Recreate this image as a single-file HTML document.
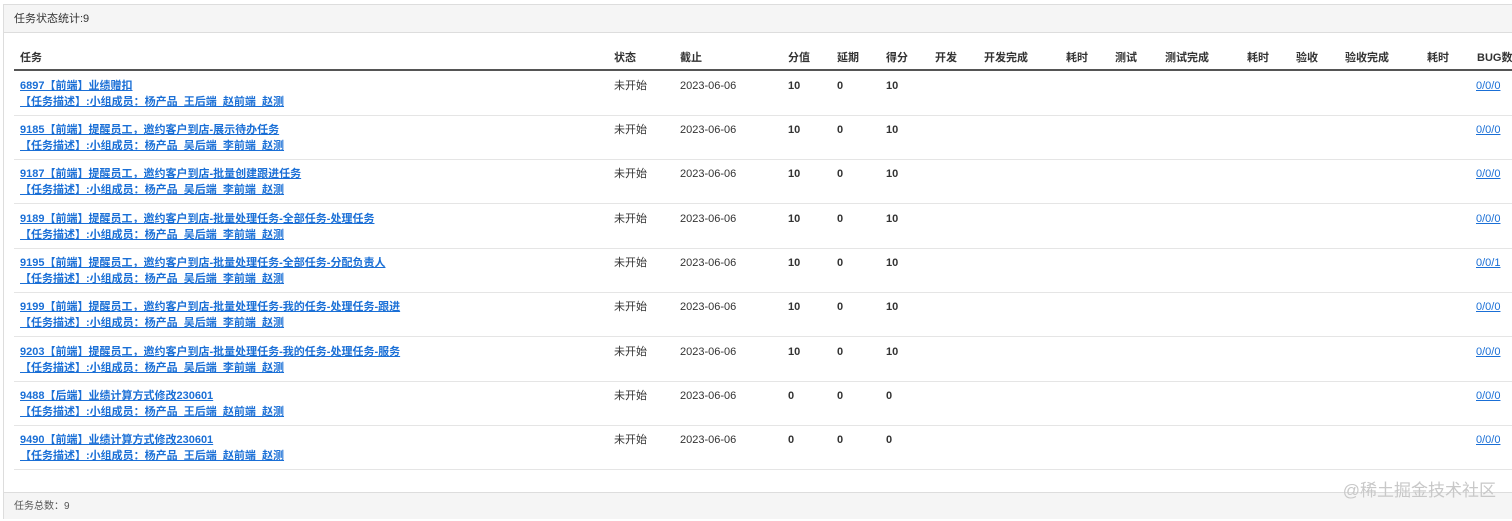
<!DOCTYPE html>
<html><head><meta charset="utf-8"><style>
body{margin:0;width:1512px;height:521px;background:#fff;font-family:"Liberation Sans","Noto Sans CJK SC",sans-serif;font-size:11px;line-height:14px;color:#333;overflow:hidden;position:relative}
div,a,span{white-space:nowrap}
.panel{position:absolute;left:3px;top:4px;width:1515px;height:515px;border:1px solid #ddd;box-sizing:border-box}
.hd{position:absolute;left:4px;top:5px;width:1510px;height:27px;background:#f5f5f5;border-bottom:1px solid #ddd}
.hd span{position:absolute;left:10px;top:7px}
.ft{position:absolute;left:4px;top:492px;width:1510px;height:26px;background:#f5f5f5;border-top:1px solid #ddd}
.ft span{position:absolute;left:10px;top:7px;color:#555;font-size:10px}
.th{position:absolute;top:51px;font-weight:bold;color:#333}
.hl{position:absolute;left:14px;top:69px;width:1500px;height:2px;background:#555}
.row{position:absolute;left:14px;width:1500px;height:44px;border-bottom:1px solid #e5e5e5}
.row a{position:absolute;color:#1a6fd6;text-decoration:underline;line-height:14px}
.t{left:6px;top:8px;font-weight:bold}
.d{left:6px;top:24px;font-weight:bold}
.row span{position:absolute;top:8px;line-height:14px;display:inline-block;height:14px}
.b{font-weight:bold}
.wm{position:absolute;right:16px;top:484px;font-size:17px;color:#c8c8c8}
</style></head><body>
<div class="panel"></div>
<div class="hd"><span>任务状态统计:9</span></div>
<div class="th" style="left:20px">任务</div>
<div class="th" style="left:614px">状态</div>
<div class="th" style="left:680px">截止</div>
<div class="th" style="left:788px">分值</div>
<div class="th" style="left:837px">延期</div>
<div class="th" style="left:886px">得分</div>
<div class="th" style="left:935px">开发</div>
<div class="th" style="left:984px">开发完成</div>
<div class="th" style="left:1066px">耗时</div>
<div class="th" style="left:1115px">测试</div>
<div class="th" style="left:1165px">测试完成</div>
<div class="th" style="left:1247px">耗时</div>
<div class="th" style="left:1296px">验收</div>
<div class="th" style="left:1345px">验收完成</div>
<div class="th" style="left:1427px">耗时</div>
<div class="th" style="left:1477px">BUG数</div>
<div class="hl"></div>

<div class="row" style="top:71px"><a class="t">6897【前端】业绩赠扣</a><a class="d">【任务描述】:小组成员：杨产品_王后端_赵前端_赵测</a><span style="left:600px">未开始</span><span style="left:666px">2023-06-06</span><span class="b" style="left:774px">10</span><span class="b" style="left:823px">0</span><span class="b" style="left:872px">10</span><a style="left:1462px;top:8px">0/0/0</a></div>
<div class="row" style="top:115px"><a class="t">9185【前端】提醒员工，邀约客户到店-展示待办任务</a><a class="d">【任务描述】:小组成员：杨产品_吴后端_李前端_赵测</a><span style="left:600px">未开始</span><span style="left:666px">2023-06-06</span><span class="b" style="left:774px">10</span><span class="b" style="left:823px">0</span><span class="b" style="left:872px">10</span><a style="left:1462px;top:8px">0/0/0</a></div>
<div class="row" style="top:159px"><a class="t">9187【前端】提醒员工，邀约客户到店-批量创建跟进任务</a><a class="d">【任务描述】:小组成员：杨产品_吴后端_李前端_赵测</a><span style="left:600px">未开始</span><span style="left:666px">2023-06-06</span><span class="b" style="left:774px">10</span><span class="b" style="left:823px">0</span><span class="b" style="left:872px">10</span><a style="left:1462px;top:8px">0/0/0</a></div>
<div class="row" style="top:204px"><a class="t">9189【前端】提醒员工，邀约客户到店-批量处理任务-全部任务-处理任务</a><a class="d">【任务描述】:小组成员：杨产品_吴后端_李前端_赵测</a><span style="left:600px">未开始</span><span style="left:666px">2023-06-06</span><span class="b" style="left:774px">10</span><span class="b" style="left:823px">0</span><span class="b" style="left:872px">10</span><a style="left:1462px;top:8px">0/0/0</a></div>
<div class="row" style="top:248px"><a class="t">9195【前端】提醒员工，邀约客户到店-批量处理任务-全部任务-分配负责人</a><a class="d">【任务描述】:小组成员：杨产品_吴后端_李前端_赵测</a><span style="left:600px">未开始</span><span style="left:666px">2023-06-06</span><span class="b" style="left:774px">10</span><span class="b" style="left:823px">0</span><span class="b" style="left:872px">10</span><a style="left:1462px;top:8px">0/0/1</a></div>
<div class="row" style="top:292px"><a class="t">9199【前端】提醒员工，邀约客户到店-批量处理任务-我的任务-处理任务-跟进</a><a class="d">【任务描述】:小组成员：杨产品_吴后端_李前端_赵测</a><span style="left:600px">未开始</span><span style="left:666px">2023-06-06</span><span class="b" style="left:774px">10</span><span class="b" style="left:823px">0</span><span class="b" style="left:872px">10</span><a style="left:1462px;top:8px">0/0/0</a></div>
<div class="row" style="top:337px"><a class="t">9203【前端】提醒员工，邀约客户到店-批量处理任务-我的任务-处理任务-服务</a><a class="d">【任务描述】:小组成员：杨产品_吴后端_李前端_赵测</a><span style="left:600px">未开始</span><span style="left:666px">2023-06-06</span><span class="b" style="left:774px">10</span><span class="b" style="left:823px">0</span><span class="b" style="left:872px">10</span><a style="left:1462px;top:8px">0/0/0</a></div>
<div class="row" style="top:381px"><a class="t">9488【后端】业绩计算方式修改230601</a><a class="d">【任务描述】:小组成员：杨产品_王后端_赵前端_赵测</a><span style="left:600px">未开始</span><span style="left:666px">2023-06-06</span><span class="b" style="left:774px">0</span><span class="b" style="left:823px">0</span><span class="b" style="left:872px">0</span><a style="left:1462px;top:8px">0/0/0</a></div>
<div class="row" style="top:425px"><a class="t">9490【前端】业绩计算方式修改230601</a><a class="d">【任务描述】:小组成员：杨产品_王后端_赵前端_赵测</a><span style="left:600px">未开始</span><span style="left:666px">2023-06-06</span><span class="b" style="left:774px">0</span><span class="b" style="left:823px">0</span><span class="b" style="left:872px">0</span><a style="left:1462px;top:8px">0/0/0</a></div>

<div class="ft"><span>任务总数：9</span></div>
<div class="wm">@稀土掘金技术社区</div>
</body></html>
